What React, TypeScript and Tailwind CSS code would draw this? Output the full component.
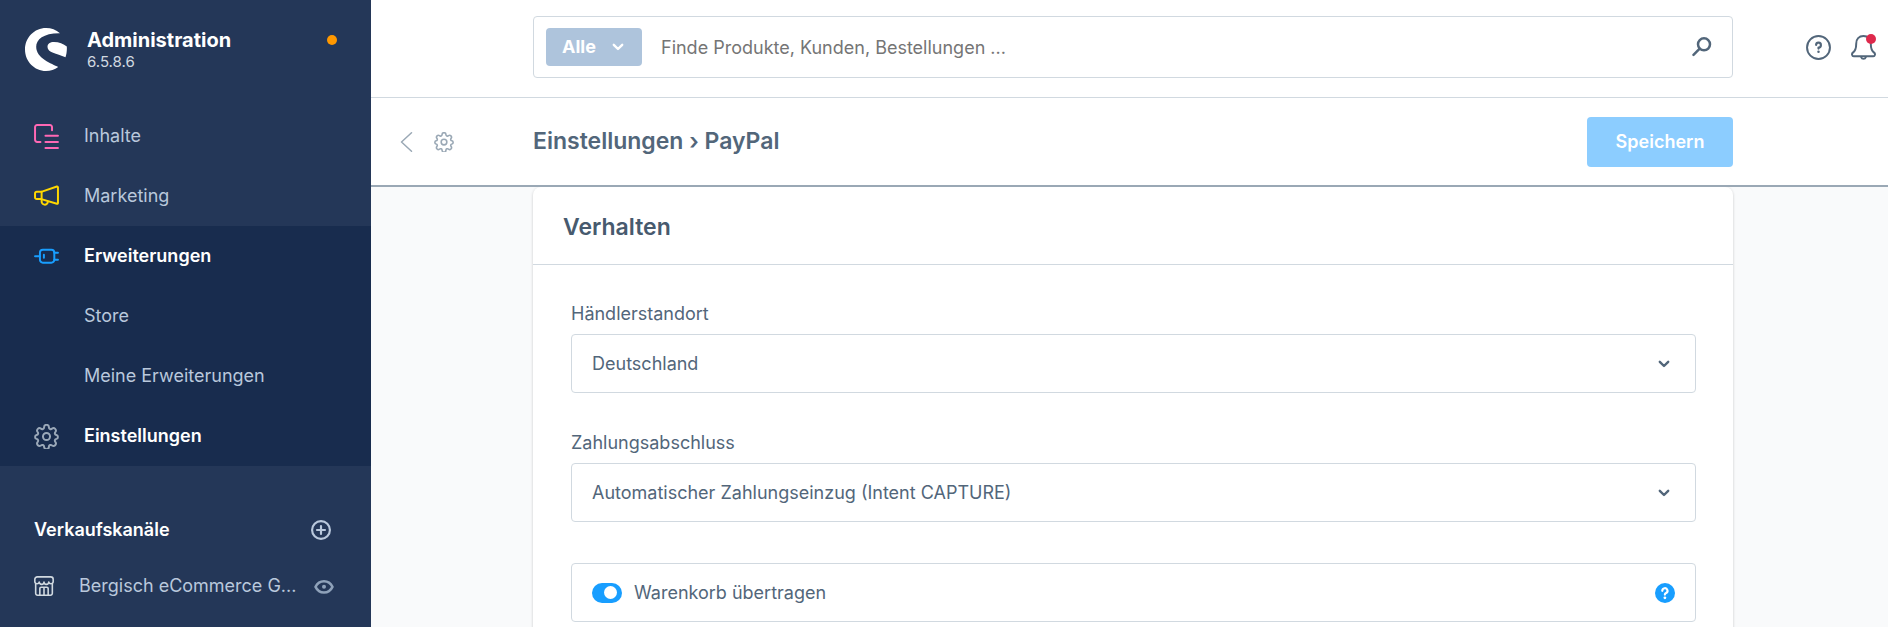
import React, { FC, ReactNode, SVGProps, useState } from 'react'

type IconProps = SVGProps<SVGSVGElement>

const strokeProps = {
  viewBox: '0 0 24 24',
  fill: 'none',
  stroke: 'currentColor',
  strokeWidth: 1.9,
  strokeLinecap: 'round' as const,
  strokeLinejoin: 'round' as const,
  'aria-hidden': true,
}

const Logo: FC<IconProps> = (props) => (
  <svg viewBox='0 0 42 43' fill='currentColor' aria-hidden {...props}>
    <path d='M35 5.2A21.3 21.3 0 0 0 21 0C9.4 0 0 9.6 0 21.5S9.4 43 21 43c4.5 0 8.7-1.4 12.2-4C27 35.5 11.2 30.5 11.2 18.7 11.2 11.5 18.5 5 35 5.2Z' />
    <path d='M41.8 18.5C38.5 15.8 34 14 29 14c-4 0-6.500 1.8-6.500 5 0 5.500 9 6.500 18 10.300 1-3 1.600-7 1.300-10.800Z' />
  </svg>
)

const ContentIcon: FC<IconProps> = (props) => (
  <svg {...strokeProps} {...props}>
    <path d='M17.3 6V3a2 2 0 0 0-2-2H3a2 2 0 0 0-2 2v12.2a2 2 0 0 0 2 2h3.2' />
    <path d='M11 11.2h12M11 17.2h12M11 23h12' />
  </svg>
)

const MegaphoneIcon: FC<IconProps> = (props) => (
  <svg {...strokeProps} {...props}>
    <path d='M7 7.5 22 2.4a.8.8 0 0 1 1 .8v15a.8.8 0 0 1-1 .8L7 14.5H2.6A1.6 1.6 0 0 1 1 12.9V9.1a1.6 1.6 0 0 1 1.6-1.6Z' />
    <path d='M7.3 7.5v7M7.3 14.5v2a3 3 0 0 0 6 .6' />
  </svg>
)

const PlugIcon: FC<IconProps> = (props) => (
  <svg {...strokeProps} {...props}>
    <path d='M8.5 5.5h8.2a2.8 2.8 0 0 1 2.8 2.8v6.8a2.8 2.8 0 0 1-2.8 2.8H8.5a2.8 2.8 0 0 1-2.8-2.8V8.3a2.8 2.8 0 0 1 2.8-2.8Z' />
    <path d='M1 11.7h4.5M19.5 8.3H23M19.5 15.2H23M9.5 10.3v2.8' />
  </svg>
)

const GearIcon: FC<IconProps> = (props) => (
  <svg {...strokeProps} {...props}>
    <circle cx='12' cy='12' r='3.4' />
    <path d='M14.3 3.1a2.3 2.3 0 0 0-4.6 0c0 1.7-1.9 2.4-3.1 1.3a2.3 2.3 0 0 0-3.2 3.2c1.1 1.2.5 2.8-.9 3a1.9 1.9 0 0 0 0 3.7c1.4.1 2 1.9.9 3.1a2.3 2.3 0 0 0 3.2 3.2c1.2-1.1 3.1-.4 3.1 1.3a2.3 2.3 0 0 0 4.6 0c0-1.7 1.9-2.4 3.1-1.3a2.3 2.3 0 0 0 3.2-3.2c-1.1-1.2-.5-3 .9-3.1a1.9 1.9 0 0 0 0-3.7c-1.4-.2-2-1.8-.9-3a2.3 2.3 0 0 0-3.2-3.2c-1.2 1.1-3.1.4-3.1-1.3Z' />
  </svg>
)

const PlusCircleIcon: FC<IconProps> = (props) => (
  <svg {...strokeProps} strokeWidth={2.6} {...props}>
    <circle cx='12' cy='12' r='10.7' />
    <path d='M12 7.2v9.6M7.2 12h9.6' />
  </svg>
)

const StoreIcon: FC<IconProps> = (props) => (
  <svg {...strokeProps} {...props}>
    <path d='M2 9v11.8A2.2 2.2 0 0 0 4.2 23h15.6a2.2 2.2 0 0 0 2.2-2.2V9' />
    <path d='M4 1h16a3 3 0 0 1 3 3v3.2a2.7 2.7 0 0 1-5.3 0 2.8 2.8 0 0 1-5.7 0 2.8 2.8 0 0 1-5.7 0A2.7 2.7 0 0 1 1 7.2V4a3 3 0 0 1 3-3Z' />
    <path d='M7 23v-8a1.5 1.5 0 0 1 1.5-1.5h7A1.5 1.5 0 0 1 17 15v8M12 13.5V23' />
  </svg>
)

const EyeIcon: FC<IconProps> = (props) => (
  <svg {...strokeProps} strokeWidth={3} {...props}>
    <path d='M1.8 13C4 8.5 7.5 6.2 12 6.2s8 2.3 10.2 6.8c-2.2 4.500-5.700 6.800-10.200 6.800S4 17.500 1.800 13Z' />
    <circle cx='12' cy='13' r='2.4' fill='currentColor' stroke='none' />
  </svg>
)

const ChevronIcon: FC<IconProps> = (props) => (
  <svg {...strokeProps} viewBox='0 0 12 8' strokeWidth={2.4} {...props}>
    <path d='M1.8 1.8 6 6l4.2-4.2' />
  </svg>
)

const SearchIcon: FC<IconProps> = (props) => (
  <svg {...strokeProps} strokeWidth={3} {...props}>
    <circle cx='14.4' cy='8.8' r='7.2' />
    <path d='m9.2 14-7.4 7.4' />
  </svg>
)

const HelpIcon: FC<IconProps> = (props) => (
  <svg {...strokeProps} {...props}>
    <circle cx='12' cy='12' r='11' />
    <path d='M9.7 9.5A2.3 2.3 0 1 1 12 12v1' strokeWidth={2.1} />
    <circle cx='12' cy='16' r='1.2' fill='currentColor' stroke='none' />
  </svg>
)

const BellIcon: FC<IconProps> = (props) => (
  <svg {...strokeProps} {...props}>
    <path d='M12 1C7.6 1 5 4 5 8.3c0 5-1.2 7.2-3.2 8.6-1.4 1.1-.9 3.5.8 3.5h18.8c1.7 0 2.2-2.4.8-3.5-2-1.4-3.2-3.6-3.2-8.6C19 4 16.4 1 12 1Z' />
    <path d='M9.8 21.3a2.3 2.3 0 0 0 4.4 0' />
  </svg>
)

type NavItemProps = {
  label: string;
  icon?: ReactNode;
  active?: boolean;
}

const NavItem: FC<NavItemProps> = ({ label, icon, active = false }) => {
  return (
    <li>
      <a href='#' className={`flex h-[60px] items-center gap-[25px] pl-[34px] ${active ? 'font-semibold text-white' : 'text-[#b9c8dc]'}`}>
        <span className='w-[25px] shrink-0'>{icon}</span>
        <span>{label}</span>
      </a>
    </li>
  )
}

const Sidebar: FC = () => {
  return (
    <aside className='w-[371px] shrink-0 bg-[#243758] text-lg'>
      <div className='flex h-[106px] items-start pl-[25px] pr-[34px] pt-7'>
        <Logo className='h-[43px] w-[42px] text-white' />
        <div className='ml-5'>
          <p className='text-xl leading-6 font-bold text-white'>Administration</p>
          <p className='text-[15px] leading-5 text-[#d1d9e0]'>6.5.8.6</p>
        </div>
        <span className='mt-[7px] ml-auto size-[10px] rounded-full bg-[#ff9800]' />
      </div>

      <nav>
        <ul>
          <NavItem label='Inhalte' icon={<ContentIcon className='size-[25px] text-[#ff68b4]' />} />
          <NavItem label='Marketing' icon={<MegaphoneIcon className='size-[25px] text-[#ffd700]' />} />
        </ul>
        <ul className='bg-[#182c4e]'>
          <NavItem active label='Erweiterungen' icon={<PlugIcon className='size-[25px] text-[#189eff]' />} />
          <NavItem label='Store' />
          <NavItem label='Meine Erweiterungen' />
          <NavItem active label='Einstellungen' icon={<GearIcon className='size-[25px] text-[#9aa8b8]' />} />
        </ul>
      </nav>

      <div className='flex items-center justify-between pt-[50px] pr-10 pl-[34px]'>
        <h2 className='font-semibold text-white'>Verkaufskanäle</h2>
        <button type='button' aria-label='Verkaufskanal hinzufügen' className='text-[#b9c8dc]'>
          <PlusCircleIcon className='size-5' />
        </button>
      </div>
      <div className='flex items-center pt-7 pr-[37px] pl-[34px] text-[#b9c8dc]'>
        <StoreIcon className='size-5 shrink-0 text-[#d1d9e0]' />
        <a href='#' className='ml-[25px] whitespace-nowrap'>Bergisch eCommerce G...</a>
        <button type='button' aria-label='Verkaufskanal ansehen' className='ml-auto shrink-0 text-[#8fa2ba]'>
          <EyeIcon className='size-5' />
        </button>
      </div>
    </aside>
  )
}

const Header: FC = () => {
  return (
    <header className='grid h-[98px] shrink-0 grid-cols-[162px_minmax(0,1fr)_155px] border-b border-[#d1d9e0] bg-white'>
      <form className='col-start-2 mt-4 flex h-[62px] items-center rounded border border-[#d1d9e0] pr-5 pl-3'>
        <button type='button' className='flex h-[38px] w-24 shrink-0 items-center justify-between rounded bg-[#aec4dc] pr-[18px] pl-4 font-bold text-white'>
          Alle
          <ChevronIcon className='h-2 w-3' />
        </button>
        <input
          type='text'
          aria-label='Suche'
          placeholder='Finde Produkte, Kunden, Bestellungen ...'
          className='min-w-0 grow px-[19px] pt-0.5 outline-none placeholder:text-[#757575]'
        />
        <button type='submit' aria-label='Suchen'>
          <SearchIcon className='size-5' />
        </button>
      </form>
      <div className='mt-[35px] flex items-start justify-end gap-5 pr-3'>
        <button type='button' aria-label='Hilfe'>
          <HelpIcon className='size-[25px]' />
        </button>
        <button type='button' aria-label='Benachrichtigungen' className='relative'>
          <BellIcon className='size-[25px]' />
          <span className='absolute -top-px right-0 size-[10px] rounded-full bg-[#de294c]' />
        </button>
      </div>
    </header>
  )
}

const PageBar: FC = () => {
  return (
    <div className='grid h-[89px] shrink-0 grid-cols-[162px_minmax(0,1fr)_155px] items-center border-b-2 border-[#9aa8b5] bg-white'>
      <div className='flex items-center gap-[21px] pl-[29px] text-[#9aa8b5]'>
        <a href='#' aria-label='Zurück'>
          <svg {...strokeProps} viewBox='0 0 13 20' strokeWidth={1.5} className='h-5 w-[13px]'>
            <path d='m11.5.8-10 9.2 10 9.2' />
          </svg>
        </a>
        <GearIcon className='size-5' />
      </div>
      <div className='flex items-center justify-between'>
        <h1 className='text-[23px] font-semibold'>Einstellungen › PayPal</h1>
        <button type='button' className='h-[50px] w-[146px] rounded bg-[#8ccdff] font-semibold text-white'>Speichern</button>
      </div>
    </div>
  )
}

type SelectFieldProps = {
  id: string;
  label: string;
  options: string[];
}

const SelectField: FC<SelectFieldProps> = ({ id, label, options }) => {
  return (
    <div className='pb-9'>
      <label htmlFor={id} className='block leading-7'>{label}</label>
      <div className='mt-[6px] grid items-center'>
        <select id={id} className='col-start-1 row-start-1 h-[59px] w-full appearance-none rounded border border-[#d1d9e0] bg-white px-5 outline-none'>
          {options.map(option => <option key={option}>{option}</option>)}
        </select>
        <ChevronIcon className='pointer-events-none col-start-1 row-start-1 mr-[26px] h-2 w-3 justify-self-end' />
      </div>
    </div>
  )
}

const BehaviorCard: FC = () => {
  const [submitCart, setSubmitCart] = useState(true)

  return (
    <section className='col-start-2 rounded-lg bg-white pb-10 shadow-[0_1px_3px_rgba(0,0,0,0.2)]'>
      <h2 className='flex h-[78px] items-center border-b border-[#d1d9e0] px-[30px] pt-1 text-[23px] font-semibold text-[#475a6e]'>Verhalten</h2>
      <div className='pt-[35px] pr-[37px] pl-[38px]'>
        <SelectField id='merchant-location' label='Händlerstandort' options={['Deutschland', 'Andere Länder']} />
        <SelectField id='intent' label='Zahlungsabschluss' options={['Automatischer Zahlungseinzug (Intent CAPTURE)', 'Manueller Zahlungseinzug (Intent AUTHORIZE)']} />
        <div className='mt-[5px] flex h-[59px] items-center rounded border border-[#d1d9e0] px-5'>
          <label className='flex items-center gap-3'>
            <span className='grid items-center'>
              <input
                type='checkbox'
                checked={submitCart}
                onChange={event => setSubmitCart(event.target.checked)}
                className='peer col-start-1 row-start-1 h-5 w-[30px] appearance-none rounded-full bg-[#c2c9d1] checked:bg-[#189eff]'
              />
              <span className='pointer-events-none col-start-1 row-start-1 ml-1 size-[13px] rounded-full bg-white peer-checked:ml-3' />
            </span>
            Warenkorb übertragen
          </label>
          <button type='button' aria-label='Hilfe zu Warenkorb übertragen' className='ml-auto flex size-5 items-center justify-center rounded-full bg-[#189eff] text-white'>
            <svg {...strokeProps} viewBox='0 0 20 20' strokeWidth={2.2} className='size-5'>
              <path d='M7.3 7.8a2.6 2.6 0 1 1 3.8 2.3c-.8.4-1.2.8-1.2 1.5' />
              <circle cx='9.900' cy='14.8' r='1.4' fill='currentColor' stroke='none' />
            </svg>
          </button>
        </div>
      </div>
    </section>
  )
}

const App: FC = () => {
  return (
    <div className="flex h-screen overflow-hidden bg-[#f9fafb] font-['Inter',sans-serif] text-lg text-[#52667a]">
      <Sidebar />
      <div className='flex min-w-0 grow flex-col'>
        <Header />
        <PageBar />
        <main className='grid min-h-0 grow grid-cols-[162px_minmax(0,1fr)_155px] items-start overflow-hidden'>
          <BehaviorCard />
        </main>
      </div>
    </div>
  )
}

export default App
